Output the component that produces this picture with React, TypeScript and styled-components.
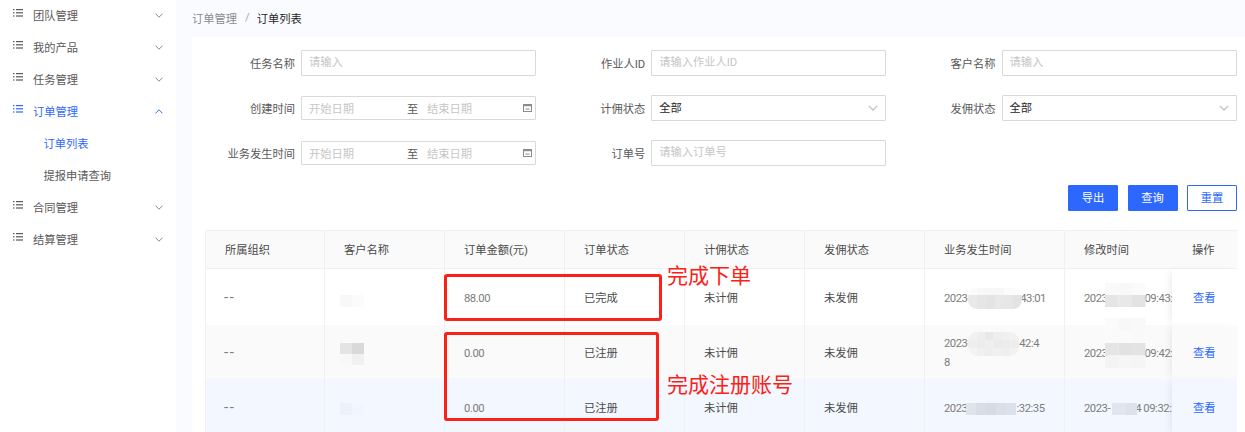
import React from "react";
import styled, { createGlobalStyle } from "styled-components";

const FONT = `Roboto, "Noto Sans CJK SC", sans-serif`;
const BLUE = "#2d68fe";
const RED = "#fb2116";

const GlobalStyle = createGlobalStyle`
  html, body {
    margin: 0;
    padding: 0;
    height: 100%;
    overflow: hidden;
  }
  body {
    font-family: ${FONT};
    font-size: 11.25px;
    color: #595959;
  }
`;

const Page = styled.div`
  position: relative;
  display: flex;
  width: 1245px;
  height: 432px;
  overflow: hidden;
  background: #fafbff;
`;

const Sidebar = styled.nav`
  flex: 0 0 176px;
  margin-top: -1px;
  background: #fff;
`;

const MenuItem = styled.div<{ $active?: boolean }>`
  display: flex;
  align-items: center;
  box-sizing: border-box;
  height: 32px;
  padding: 0 13px 1px 13px;
  color: ${props => (props.$active ? BLUE : "#595959")};
`;

const MenuIcon = styled.svg`
  flex: none;
  width: 10px;
  height: 8px;
  margin: -3px 10px 0 0;
`;

const MenuLabel = styled.span`
  flex: 1;
`;

const Chevron = styled.svg<{ $open?: boolean; $size?: number }>`
  flex: none;
  width: ${props => props.$size ?? 8}px;
  height: ${props => Math.round((props.$size ?? 8) * 0.625)}px;
  margin-top: 2px;
  transform: ${props => (props.$open ? "rotate(180deg)" : "none")};
`;

const SubItem = styled.div<{ $active?: boolean }>`
  display: flex;
  align-items: center;
  box-sizing: border-box;
  height: 32px;
  padding: 0 0 1px 43.5px;
  color: ${props => (props.$active ? BLUE : "#595959")};
`;

const Main = styled.main`
  flex: 1;
  min-width: 0;
  padding-left: 16px;
`;

const Breadcrumb = styled.div`
  display: flex;
  align-items: center;
  height: 35px;
  padding-bottom: 2px;
  color: #8c8c8c;
`;

const Separator = styled.span`
  margin: 0 7px 0 8px;
  color: #a6a6a6;
`;

const Current = styled.span`
  color: #262626;
`;

const Card = styled.section`
  height: 395px;
  padding: 13px 8px 0 13px;
  background: #fff;
`;

const FormGrid = styled.div`
  display: grid;
  grid-template-columns: repeat(3, 331px);
  column-gap: 19.25px;
  row-gap: 19px;
`;

const Field = styled.label`
  display: flex;
  align-items: center;
  height: 26px;
`;

const FieldLabel = styled.span`
  flex: 0 0 90px;
  margin: -1px 6px 0 0;
  text-align: right;
  color: #595959;
`;

const TextInput = styled.input`
  flex: 1;
  min-width: 0;
  box-sizing: border-box;
  height: 26px;
  padding: 0 0 1px 7px;
  border: 1px solid #d9d9d9;
  border-radius: 1px;
  outline: none;
  background: #fff;
  font: inherit;
  color: #262626;

  &::placeholder {
    color: #c6c6c6;
  }
`;

const DateRange = styled.div`
  flex: 1;
  min-width: 0;
  display: flex;
  align-items: center;
  box-sizing: border-box;
  height: 24px;
  padding: 0 2px 1px 7px;
  border: 1px solid #d9d9d9;
  border-radius: 1px;
`;

const DatePlaceholder = styled.span`
  color: #c6c6c6;
  width: 98px;
`;

const DateTo = styled.span`
  width: 20px;
  color: #595959;
`;

const DateEnd = styled(DatePlaceholder)`
  flex: 1;
`;

const CalendarIcon = styled.svg`
  flex: none;
  width: 9px;
  height: 9px;
  margin-right: 1px;
`;

const Select = styled.div`
  flex: 1;
  min-width: 0;
  display: flex;
  align-items: center;
  justify-content: space-between;
  box-sizing: border-box;
  height: 26px;
  padding: 0 7px 2px 7px;
  border: 1px solid #d9d9d9;
  border-radius: 1px;
  color: #262626;
`;

const Actions = styled.div`
  display: flex;
  justify-content: flex-end;
  gap: 9.5px;
  margin: 19px 0;
`;

const Button = styled.button<{ $outline?: boolean }>`
  box-sizing: border-box;
  width: 50px;
  height: 26px;
  padding: 0 0 2px;
  border: 1px solid ${BLUE};
  border-radius: 1px;
  background: ${props => (props.$outline ? "#fff" : BLUE)};
  color: ${props => (props.$outline ? BLUE : "#fff")};
  font: inherit;
`;

const Table = styled.table`
  width: 1032px;
  table-layout: fixed;
  border-collapse: separate;
  border-spacing: 0;
`;

const HeadCell = styled.th<{ $fixed?: boolean }>`
  height: 36px;
  padding: 0 0 1px ${props => (props.$fixed ? "20px" : "19px")};
  border-top: 1px solid #f0f0f0;
  border-bottom: 1px solid #f0f0f0;
  border-left: ${props => (props.$fixed ? "none" : "1px solid #f0f0f0")};
  background: #fafafa;
  font-weight: 400;
  text-align: left;
  color: #4a4a4a;
  white-space: nowrap;
  overflow: hidden;
`;

const Row = styled.tr<{ $bg: string; $height: number }>`
  height: ${props => props.$height}px;

  & > td {
    background: ${props => props.$bg};
  }
`;

const Cell = styled.td<{ $muted?: boolean; $fixed?: boolean }>`
  position: relative;
  padding: 2px 0 0 ${props => (props.$fixed ? "21px" : "19px")};
  border-left: ${props => (props.$fixed ? "none" : "1px solid #f0f0f0")};
  color: ${props => (props.$muted ? "#7d7d7d" : "#4a4a4a")};
  letter-spacing: ${props => (props.$muted ? "-0.45px" : "0")};
  line-height: 19px;
  overflow: hidden;
  white-space: nowrap;
  box-shadow: ${props => (props.$fixed ? "-5px 0 7px -3px rgba(40, 50, 90, 0.09)" : "none")};
`;

const Dash = styled.span`
  font-size: 15px;
  letter-spacing: 1.5px;
  margin-left: -1px;
`;

// room left in a date value for the part that is blurred out
const Masked = styled.span<{ $width: number }>`
  display: inline-block;
  width: ${props => props.$width}px;
`;

const ViewLink = styled.a`
  color: ${BLUE};
  text-decoration: none;
`;

const Note = styled.div<{ $left: number; $top: number }>`
  position: absolute;
  left: ${props => props.$left}px;
  top: ${props => props.$top}px;
  font-size: 21px;
  line-height: 21px;
  color: ${RED};
  white-space: nowrap;
`;

const Frame = styled.div<{ $left: number; $top: number; $width: number; $height: number }>`
  position: absolute;
  left: ${props => props.$left}px;
  top: ${props => props.$top}px;
  width: ${props => props.$width}px;
  height: ${props => props.$height}px;
  box-sizing: border-box;
  border: 3px solid ${RED};
  border-radius: 3px;
`;

const MosaicBox = styled.svg<{ $left: number; $top: number; $round?: boolean }>`
  position: absolute;
  left: ${props => props.$left}px;
  top: ${props => props.$top}px;
  border-radius: ${props => (props.$round ? "9px" : "0")};
`;

const ListGlyph = () => (
  <MenuIcon viewBox="0 0 10 8" fill="currentColor">
    <rect x="0" y="0" width="1.5" height="1.2" />
    <rect x="0" y="3.2" width="1.5" height="1.2" />
    <rect x="0" y="6.4" width="1.5" height="1.2" />
    <rect x="3" y="0" width="7" height="1.2" />
    <rect x="3" y="3.2" width="7" height="1.2" />
    <rect x="3" y="6.4" width="7" height="1.2" />
  </MenuIcon>
);

const ChevronGlyph = ({ open, size, color }: { open?: boolean; size?: number; color: string }) => (
  <Chevron $open={open} $size={size} viewBox="0 0 8 5" fill="none">
    <path d="M0.5 0.7 L4 4.2 L7.5 0.7" stroke={color} strokeWidth="1" />
  </Chevron>
);

const CalendarGlyph = () => (
  <CalendarIcon viewBox="0 0 9 9" fill="none">
    <rect x="0.5" y="1.5" width="8" height="7" stroke="#8c8c8c" />
    <rect x="0.5" y="1" width="8" height="2.2" fill="#8c8c8c" />
    <rect x="2.5" y="5.6" width="4" height="1" fill="#8c8c8c" />
  </CalendarIcon>
);

interface MenuEntry {
  label: string;
  open?: boolean;
  children?: { label: string; active?: boolean }[];
}

const menu: MenuEntry[] = [
  { label: "团队管理" },
  { label: "我的产品" },
  { label: "任务管理" },
  {
    label: "订单管理",
    open: true,
    children: [{ label: "订单列表", active: true }, { label: "提报申请查询" }],
  },
  { label: "合同管理" },
  { label: "结算管理" },
];

const columns = [
  { title: "所属组织", width: 119 },
  { title: "客户名称", width: 120 },
  { title: "订单金额(元)", width: 120 },
  { title: "订单状态", width: 120 },
  { title: "计佣状态", width: 120 },
  { title: "发佣状态", width: 120 },
  { title: "业务发生时间", width: 140 },
  { title: "修改时间", width: 108 },
  { title: "操作", width: 65 },
];

const rows = [
  {
    bg: "#fff",
    height: 56,
    amount: "88.00",
    status: "已完成",
    occurred: { head: "2023-", gap: 50, tail: "43:01", wrap: "" },
    modified: { head: "2023", gap: 37, tail: "09:43:" },
  },
  {
    bg: "#fafafa",
    height: 54,
    amount: "0.00",
    status: "已注册",
    occurred: { head: "2023-", gap: 49, tail: "42:4", wrap: "8" },
    modified: { head: "2023", gap: 37, tail: "09:42:" },
  },
  {
    bg: "#f3f7ff",
    height: 56,
    amount: "0.00",
    status: "已注册",
    occurred: { head: "2023", gap: 49, tail: ":32:35", wrap: "" },
    modified: { head: "2023-", gap: 25, tail: "4 09:32:" },
  },
];

// blurred-out patches from the screenshot, page coordinates
const mosaics = [
  { x: 340, y: 295, w: 12, h: 12, round: false, colors: [["#f8f8f8", "#fbfbfb"]] },
  { x: 340, y: 343, w: 12, h: 11, round: false, colors: [["#e4e4e4", "#d9d9d9"], ["#f8f8f8", "#f1f1f1"]] },
  { x: 340, y: 403, w: 12, h: 12, round: false, colors: [["#eef1f9", "#f1f5fd"]] },
  { x: 968, y: 288, w: 9, h: 7, round: true, colors: [
    ["#fbfbfb", "#f8f8f8", "#f8f8f8", "#f7f7f7", "#fbfbfb", "#fcfcfc"],
    ["#e9e9e9", "#e6e6e6", "#e4e4e4", "#e8e8e8", "#e7e7e7", "#e3e3e3"],
    ["#e9e9e9", "#e6e6e6", "#e4e4e4", "#e8e8e8", "#e7e7e7", "#e3e3e3"],
  ] },
  { x: 1105, y: 283, w: 13.5, h: 12, round: false, colors: [
    ["#fafafa", "#f8f8f8", "#fbfbfb"],
    ["#e5e5e5", "#e8e8e8", "#e3e3e3"],
  ] },
  { x: 968, y: 332, w: 8.5, h: 8, round: true, colors: [
    ["#f1f1f1", "#eeeeee", "#e8e8e8", "#eeeeee", "#f0f0f0", "#f1f1f1"],
    ["#eeeeee", "#ececec", "#eeeeee", "#ebebeb", "#ececec", "#ededed"],
    ["#f4f4f4", "#f0f0f0", "#eeeeee", "#f0f0f0", "#eeeeee", "#f2f2f2"],
  ] },
  { x: 1105, y: 318, w: 13.5, h: 12.5, round: false, colors: [
    ["#fbfbfb", "#f8f8f8", "#f9f9f9"],
    ["#fafafa", "#fafafa", "#f9f9f9"],
    ["#e5e5e5", "#e2e2e2", "#e3e3e3"],
    ["#f4f4f4", "#f6f6f6", "#f5f5f5"],
  ] },
  { x: 966, y: 403, w: 10, h: 12, round: false, colors: [["#dfe3eb", "#d9dde6", "#d7dbe4", "#dbdfe8", "#dde1ea"]] },
  { x: 1112, y: 403, w: 12.5, h: 12, round: false, colors: [["#e1e5ee", "#dee2eb"]] },
];

export default function App() {
  return (
    <Page>
      <GlobalStyle />
      <Sidebar>
        {menu.map(item => (
          <React.Fragment key={item.label}>
            <MenuItem $active={item.open}>
              <ListGlyph />
              <MenuLabel>{item.label}</MenuLabel>
              <ChevronGlyph open={item.open} color={item.open ? BLUE : "#8c8c8c"} />
            </MenuItem>
            {item.children?.map(child => (
              <SubItem key={child.label} $active={child.active}>
                {child.label}
              </SubItem>
            ))}
          </React.Fragment>
        ))}
      </Sidebar>

      <Main>
        <Breadcrumb>
          订单管理
          <Separator>/</Separator>
          <Current>订单列表</Current>
        </Breadcrumb>

        <Card>
          <FormGrid>
            <Field>
              <FieldLabel>任务名称</FieldLabel>
              <TextInput placeholder="请输入" />
            </Field>
            <Field>
              <FieldLabel>作业人ID</FieldLabel>
              <TextInput placeholder="请输入作业人ID" />
            </Field>
            <Field>
              <FieldLabel>客户名称</FieldLabel>
              <TextInput placeholder="请输入" />
            </Field>
            <Field>
              <FieldLabel>创建时间</FieldLabel>
              <DateRange>
                <DatePlaceholder>开始日期</DatePlaceholder>
                <DateTo>至</DateTo>
                <DateEnd>结束日期</DateEnd>
                <CalendarGlyph />
              </DateRange>
            </Field>
            <Field>
              <FieldLabel>计佣状态</FieldLabel>
              <Select>
                全部
                <ChevronGlyph size={10} color="#bfbfbf" />
              </Select>
            </Field>
            <Field>
              <FieldLabel>发佣状态</FieldLabel>
              <Select>
                全部
                <ChevronGlyph size={10} color="#bfbfbf" />
              </Select>
            </Field>
            <Field>
              <FieldLabel>业务发生时间</FieldLabel>
              <DateRange>
                <DatePlaceholder>开始日期</DatePlaceholder>
                <DateTo>至</DateTo>
                <DateEnd>结束日期</DateEnd>
                <CalendarGlyph />
              </DateRange>
            </Field>
            <Field>
              <FieldLabel>订单号</FieldLabel>
              <TextInput placeholder="请输入订单号" />
            </Field>
          </FormGrid>

          <Actions>
            <Button>导出</Button>
            <Button>查询</Button>
            <Button $outline>重置</Button>
          </Actions>

          <Table>
            <colgroup>
              {columns.map(col => (
                <col key={col.title} width={col.width} />
              ))}
            </colgroup>
            <thead>
              <tr>
                {columns.map(col => (
                  <HeadCell key={col.title} $fixed={col.title === "操作"}>
                    {col.title}
                  </HeadCell>
                ))}
              </tr>
            </thead>
            <tbody>
              {rows.map((row, index) => (
                <Row key={index} $bg={row.bg} $height={row.height}>
                  <Cell $muted>
                    <Dash>--</Dash>
                  </Cell>
                  <Cell />
                  <Cell $muted>{row.amount}</Cell>
                  <Cell>{row.status}</Cell>
                  <Cell>未计佣</Cell>
                  <Cell>未发佣</Cell>
                  <Cell $muted>
                    <div>
                      {row.occurred.head}
                      <Masked $width={row.occurred.gap} />
                      {row.occurred.tail}
                    </div>
                    {row.occurred.wrap && <div>{row.occurred.wrap}</div>}
                  </Cell>
                  <Cell $muted>
                    {row.modified.head}
                    <Masked $width={row.modified.gap} />
                    {row.modified.tail}
                  </Cell>
                  <Cell $fixed>
                    <ViewLink href="#">查看</ViewLink>
                  </Cell>
                </Row>
              ))}
            </tbody>
          </Table>
        </Card>
      </Main>

      {mosaics.map((m, index) => (
        <MosaicBox
          key={index}
          $left={m.x}
          $top={m.y}
          $round={m.round}
          width={m.w * m.colors[0].length}
          height={m.h * m.colors.length}
        >
          {m.colors.map((line, r) =>
            line.map((color, c) => (
              <rect key={`${r}-${c}`} x={c * m.w} y={r * m.h} width={m.w} height={m.h} fill={color} />
            ))
          )}
        </MosaicBox>
      ))}

      <Frame $left={444} $top={274} $width={218} $height={47} />
      <Frame $left={444} $top={332} $width={215} $height={89} />
      <Note $left={667} $top={266}>完成下单</Note>
      <Note $left={667} $top={375}>完成注册账号</Note>
    </Page>
  );
}
